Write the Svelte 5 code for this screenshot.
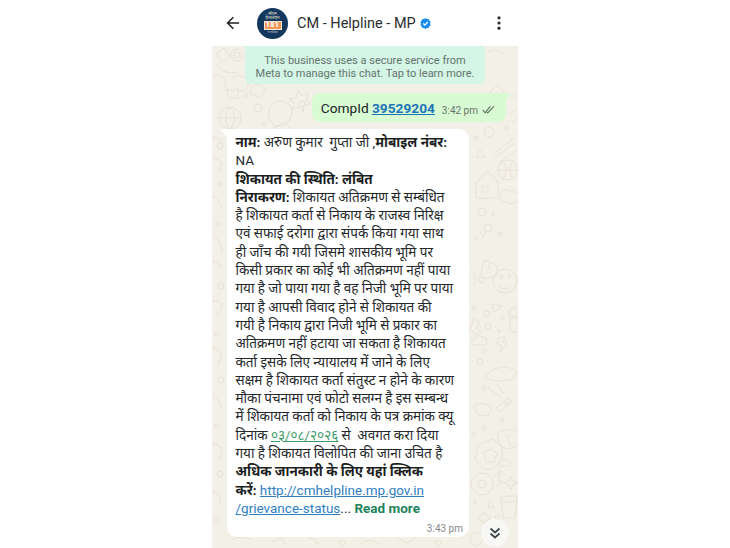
<script>
  const ring = (x, y, r) => `M${x - r} ${y}a${r} ${r} 0 1 0 ${r * 2} 0a${r} ${r} 0 1 0-${r * 2} 0`;

  // wallpaper doodles, only the parts that show round the bubbles
  const doodles = [
    // top left: target, rocket, globe, star box
    ring(25, 9, 6), ring(25, 9, 3),
    "M4 8l8-6 6 8-8 6zM6 20c4 6 12 8 20 6",
    ring(18, 72, 11), "M7 72h22M18 61c-6 6-6 16 0 22M18 61c6 6 6 16 0 22",
    "M16 50l-1-7 6 2 5-3v7l3 3h-13z",
    "M2 30c5-2 9 0 11 4s0 8-4 9M20 32c6-4 14-2 16 4s-4 10-10 9",
    "M40 40c6-3 12-1 14 4l-6 7-10-3zM60 58c8-6 18-2 20 6s-8 18-16 16-10-16-4-22z",
    ring(46, 62, 4), ring(34, 50, 2), ring(90, 58, 3), ring(52, 78, 2),
    "M66 80c2-4 8-4 10 0 4 0 4 5 0 5H64c-3 0-3-5 2-5zM86 44l4 6 7-3-3 7 5 4-7 1-1 7-5-5-6 3 2-7-5-4 7-1z",
    // right gutter, upper
    "M299 52c2-3 4-2 6-2M296 70l10-8M300 76l6-5",
    "M285 40l7 5-3 8h-8l-3-8z", "M258 4l12 5-3 10-12-5zM276 6c6-4 12-2 14 3",
    // right gutter
    "M264 111l4-7 5 7z", ring(277, 86, 5), ring(295, 82, 2), ring(264, 92, 2),
    "M282 112l22-16M284 106l18-14M287 117l19-14",
    ring(296, 124, 10), "M286 124h20M291 115c4 6 4 12 0 18M301 115c-4 6-4 12 0 18",
    "M264 137l11-12 11 10v17h-22zM270 140h6v6h-6z",
    ring(270, 166, 4), ring(281, 168, 1.5), ring(276, 182, 4), ring(288, 188, 2),
    "M288 150c0-6 8-8 12-4 5-1 8 3 6 7-1 5-8 6-11 3-5 1-8-3-7-6z",
    "M268 186l3 5 3-5M262 190l4 6",
    "M272 214l12 5 2 10-13 4-4-5zM276 218l3 6",
    ring(293, 235, 12), "M288 230a1.6 1.6 0 0 1 3 1l-2 2zM296 229a1.6 1.6 0 0 1 3 1l-2 2zM287 240c3 4 9 4 12 0",
    ring(269, 234, 3), "M259 224c4 3 6 10 2 16",
    "M279 258l11 2-7 6z", ring(290, 272, 2), ring(275, 268, 3),
    "M297 264l5-3 4 3v6h-9zM298 272h8v14h-8z", ring(262, 262, 2),
    "M262 272l5 4-2 6 4 4-6 2-5-5z", ring(276, 280, 3), ring(287, 285, 1.5),
    "M263 292c1-3 5-3 6-1 4-1 6 1 5 4 2 3-1 5-4 4h-8c-3 0-3-6 1-7z",
    "M286 292l7-1-2 5 4 1-7 9 1-7-4 0z", ring(272, 305, 2), ring(268, 316, 3),
    "M273 332c6-12 24-14 32-6l-6 8-14 1zM285 338l6 10M276 342l14 10",
    ring(272, 342, 2), ring(295, 358, 2),
    // right gutter, lower
    "M262 360c4-4 14-3 18 2l-4 8-10-1zM284 362l12-10 4 4-12 10z",
    ring(290, 374, 2), ring(272, 382, 2), ring(262, 388, 2),
    "M285 388c6-6 18-6 24 0l-2 10c-6 6-14 6-20 0zM293 388l6 12M299 388l-4 4",
    "M266 399l14-6 10 8 0 12-9 10h-10l-8-10zM272 406l8-3 5 5-3 8-8 0z",
    "M289 416c1-3 5-3 6-1 4-1 5 3 2 5h-10c-2-1-1-4 2-4z",
    ring(270, 438, 11), ring(270, 438, 4), "M281 430l8-5-3 9 5 2-7 4",
    "M299 430l2 5 5 2-5 2-2 5-2-5-5-2 5-2z",
    "M289 450h16l-2 22h-12zM289 456h16", "M278 454l4 7-6 1z", ring(263, 456, 1.5),
    "M266 470h4v-3h4v3h4v4h-4v3h-4v-3h-4z", ring(285, 471, 2),
    // bottom strip under the long bubble
    "M260 488c3-3 8-2 10 2s-2 10-6 10-8-8-4-12zM20 494c6-4 14-4 20 0M60 496l10-4 4 7M96 492c6 0 10 4 10 8",
    ring(130, 497, 3), "M150 498c4-5 12-5 16 0M186 492l9 5 8-5", ring(226, 497, 3),
    // left gutter
    ring(8, 100, 3), "M0 92c4-2 8 0 10 4M2 112l8 4-2 9", ring(8, 138, 2), "M0 150c6 2 10 8 10 14",
    ring(6, 178, 2), "M2 190c5 4 8 10 8 16M0 214l10 6", ring(9, 240, 3), "M0 256c5-3 10 0 10 6l-6 8",
    ring(5, 288, 2), "M0 300l10 8-4 10", ring(9, 334, 3), "M1 350c4 2 8 6 8 12", ring(5, 380, 2),
    "M0 396l10 6-2 12", ring(8, 428, 3), "M0 444c5 2 9 8 8 14", ring(5, 474, 2)
  ];
</script>

<div class="page">
  <div class="phone">
    <header class="topbar">
      <svg class="back" viewBox="0 0 16 16" width="14" height="14" aria-label="Back">
        <path d="M15 8H2M8.4 1.4 1.8 8l6.6 6.6" fill="none" stroke="#1f2326" stroke-width="1.8" />
      </svg>
      <div class="avatar">
        <span class="av-top">सीएम<br />हेल्पलाइन</span>
        <span class="av-num">181</span>
        <span class="av-foot">मध्यप्रदेश</span>
      </div>
      <span class="name">CM - Helpline - MP</span>
      <svg class="verified" viewBox="0 0 12 12" width="11" height="11" aria-label="Verified">
        <path d="M6 0l1.6 1.1 1.9-.1.6 1.8L11.6 4 11 6l.6 2-1.5 1.2-.6 1.8-1.9-.1L6 12l-1.6-1.1-1.9.1-.6-1.8L.4 8 1 6 .4 4l1.5-1.2.6-1.8 1.9.1z" fill="#1b8cf0" />
        <path d="M3.5 6l1.8 1.8 3.2-3.4" fill="none" stroke="#fff" stroke-width="1.4" />
      </svg>
      <div class="spacer"></div>
      <svg class="more" viewBox="0 0 4 14" width="4" height="14" aria-label="More">
        <circle cx="2" cy="1.8" r="1.6" /><circle cx="2" cy="7" r="1.6" /><circle cx="2" cy="12.2" r="1.6" />
      </svg>
    </header>

    <main class="chat">
      <svg class="wallpaper" viewBox="0 0 306 502" aria-hidden="true">
        {#each doodles as d}
          <path {d} />
        {/each}
      </svg>

      <div class="notice">This business uses a secure service from<br />Meta to manage this chat. Tap to learn more.</div>

      <div class="outgoing">
        <span class="out-text">CompId <a href="#top">39529204</a></span>
        <span class="out-time">3:42 pm</span>
        <svg viewBox="0 0 14 9" width="13" height="9" aria-hidden="true">
          <path d="M.8 5l2.6 3L9 1M5.4 7.4l.8.7L13 1" fill="none" stroke="#47524d" stroke-width="1.1" />
        </svg>
      </div>

      <div class="incoming">
        <div class="body">
          <b>नाम:</b> अरुण कुमार &nbsp;गुप्ता जी ,<b>मोबाइल नंबर:</b><br />
          NA<br />
          <b>शिकायत की स्थिति: लंबित</b><br />
          <b>निराकरण:</b> शिकायत अतिक्रमण से सम्बंधित<br />
          है शिकायत कर्ता से निकाय के राजस्व निरिक्ष<br />
          एवं सफाई दरोगा द्वारा संपर्क किया गया साथ<br />
          ही जाँच की गयी जिसमे शासकीय भूमि पर<br />
          किसी प्रकार का कोई भी अतिक्रमण नहीं पाया<br />
          गया है जो पाया गया है वह निजी भूमि पर पाया<br />
          गया है आपसी विवाद होने से शिकायत की<br />
          गयी है निकाय द्वारा निजी भूमि से प्रकार का<br />
          अतिक्रमण नहीं हटाया जा सकता है शिकायत<br />
          कर्ता इसके लिए न्यायालय में जाने के लिए<br />
          सक्षम है शिकायत कर्ता संतुस्ट न होने के कारण<br />
          मौका पंचनामा एवं फोटो सलग्न है इस सम्बन्ध<br />
          में शिकायत कर्ता को निकाय के पत्र क्रमांक क्यू<br />
          दिनांक <a class="date" href="#top">०३/०८/२०२६</a> से &nbsp;अवगत करा दिया<br />
          गया है शिकायत विलोपित की जाना उचित है<br />
          <b>अधिक जानकारी के लिए यहां क्लिक</b><br />
          <b>करें:</b> <a href="#top">http://cmhelpline.mp.gov.in<br />/grievance-status</a>... <span class="more-link">Read more</span>
        </div>
        <div class="in-time">3:43 pm</div>
      </div>

      <button class="scroll-down" aria-label="Scroll to bottom">
        <svg viewBox="0 0 12 12" width="12" height="12">
          <path d="M1.5 1.5 6 5.5l4.5-4M1.5 6.5 6 10.5l4.5-4" fill="none" stroke="#3f474b" stroke-width="1.7" />
        </svg>
      </button>
    </main>
  </div>
</div>

<style>
  :global(body) {
    margin: 0;
    background: #fff;
  }

  .page {
    width: 730px;
    height: 548px;
    display: flex;
    justify-content: center;
    overflow: hidden;
    font-family: Roboto, "Noto Sans", "Noto Sans Devanagari", sans-serif;
  }

  .phone {
    width: 306px;
    display: flex;
    flex-direction: column;
  }

  .topbar {
    height: 46px;
    flex-shrink: 0;
    display: flex;
    align-items: center;
    padding: 0 14px;
    background: #fff;
  }
  .back { margin-right: 17px; }
  .avatar {
    width: 31px;
    height: 31px;
    border-radius: 50%;
    background: #14375e;
    display: flex;
    flex-direction: column;
    align-items: center;
    justify-content: center;
    flex-shrink: 0;
    margin-right: 9px;
    overflow: hidden;
  }
  .av-top {
    color: #e8e4d0;
    font-size: 4px;
    line-height: 4px;
    text-align: center;
    white-space: nowrap;
  }
  .av-num {
    width: 18px;
    box-sizing: border-box;
    background: #ee9a5e;
    border: 1px solid #f3e6d6;
    color: #fff;
    font-size: 7px;
    font-weight: 700;
    line-height: 7px;
    text-align: center;
    margin-top: 1px;
    letter-spacing: 0.5px;
  }
  .av-foot {
    color: #b9c4cf;
    font-size: 3px;
    line-height: 4px;
  }
  .name {
    font-size: 14.5px;
    color: #2a2d2f;
  }
  .verified { margin-left: 4px; }
  .spacer { flex: 1; }
  .more { fill: #2a2d2f; margin-right: 3px; }

  .chat {
    flex: 1;
    position: relative;
    min-height: 0;
    background: #f3f0e8;
    display: flex;
    flex-direction: column;
  }
  .wallpaper {
    position: absolute;
    inset: 0;
    width: 100%;
    height: 100%;
  }
  .wallpaper path {
    fill: none;
    stroke: #e8e2d6;
    stroke-width: 1;
  }

  .notice {
    position: relative;
    align-self: center;
    width: 240px;
    height: 38px;
    box-sizing: border-box;
    padding-top: 8px;
    background: #d5f5e6;
    border-radius: 0 0 6px 6px;
    color: #64746d;
    font-size: 11px;
    line-height: 13px;
    text-align: center;
    white-space: nowrap;
  }

  .outgoing {
    position: relative;
    align-self: flex-end;
    margin: 9px 12px 0 0;
    height: 29px;
    box-sizing: border-box;
    padding: 0 11px 0 9px;
    display: flex;
    align-items: center;
    background: #d9fbd3;
    border-radius: 8px 0 8px 8px;
    white-space: nowrap;
  }
  .outgoing::after {
    content: "";
    position: absolute;
    left: 100%;
    top: 0;
    width: 5px;
    height: 7px;
    background: #d9fbd3;
    clip-path: polygon(0 0, 100% 0, 0 100%);
  }
  .out-text {
    font-size: 13.7px;
    color: #202426;
  }
  .out-text a {
    color: #1c74b8;
    font-weight: 700;
  }
  .out-time {
    font-size: 10px;
    color: #66736c;
    margin: 5px 4px 0 7px;
  }
  .outgoing svg { margin-top: 3px; }

  .incoming {
    position: relative;
    margin: 7px 0 0 15px;
    width: 242px;
    height: 408px;
    box-sizing: border-box;
    padding: 4px 0 0 8.5px;
    background: #fff;
    border-radius: 0 10px 10px 10px;
  }
  .incoming::before {
    content: "";
    position: absolute;
    right: 100%;
    top: 0;
    width: 7px;
    height: 8px;
    background: #fff;
    clip-path: polygon(0 0, 100% 0, 100% 100%);
  }
  .body {
    font-size: 13.5px;
    line-height: 18.3px;
    color: #24282a;
    white-space: nowrap;
  }
  .body b { color: #1b1e20; }
  .body a {
    color: #2f7fc1;
    text-decoration: underline;
  }
  .body a.date { color: #3f9a6b; }
  .more-link {
    color: #23835a;
    font-weight: 700;
  }
  .in-time {
    position: absolute;
    right: 6px;
    bottom: 3px;
    font-size: 10px;
    color: #85898b;
  }

  .scroll-down {
    position: absolute;
    left: 269px;
    top: 473px;
    width: 28px;
    height: 28px;
    padding: 0;
    border: none;
    border-radius: 50%;
    background: #f7f7f5;
    display: flex;
    align-items: center;
    justify-content: center;
  }
</style>
